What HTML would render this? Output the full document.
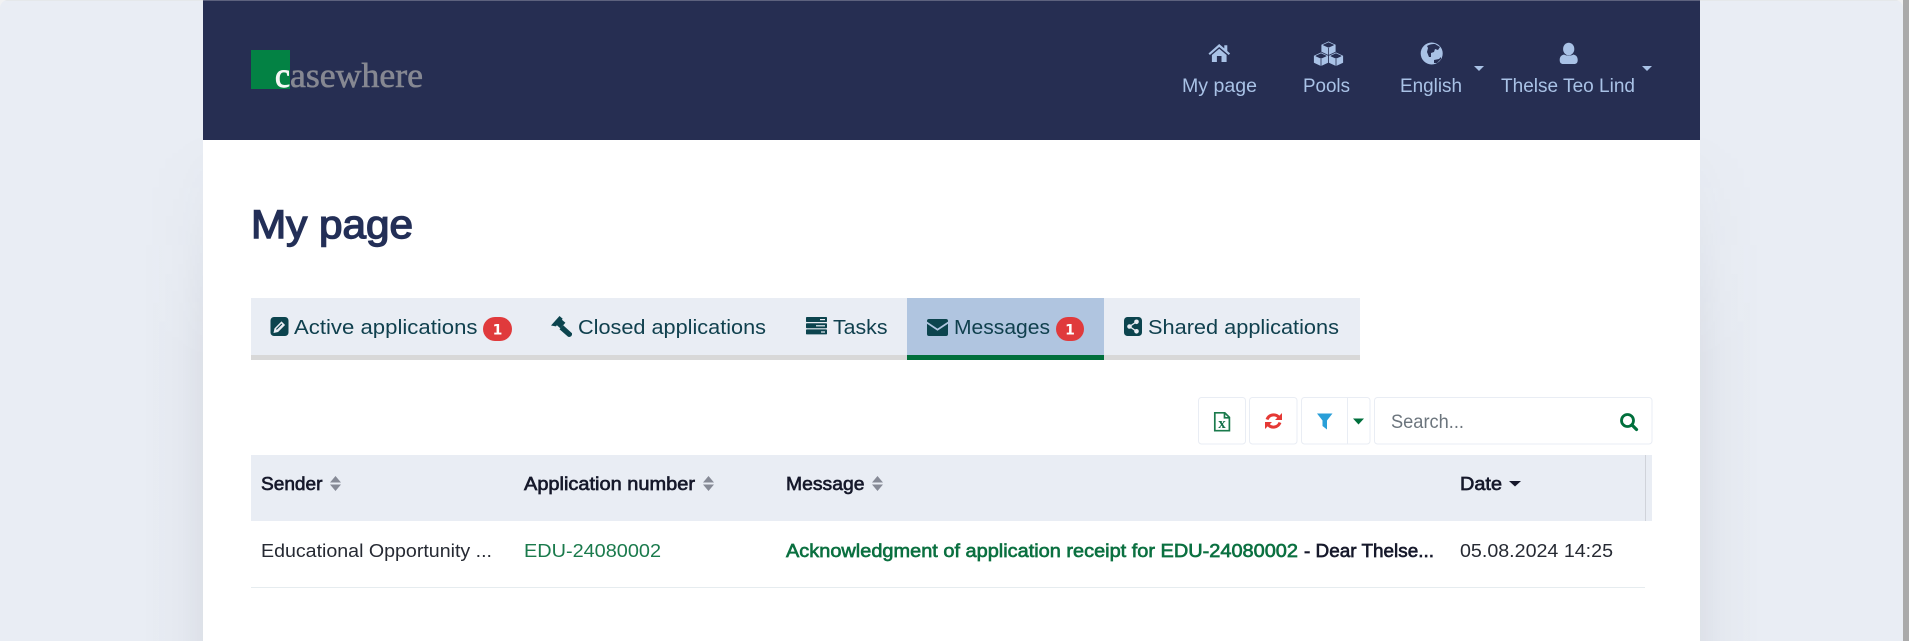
<!DOCTYPE html>
<html lang="en">
<head>
<meta charset="utf-8">
<title>My page</title>
<style>
html,body{margin:0;padding:0;width:1909px;height:641px;overflow:hidden;background:#f1f2f3;}
#bar{position:absolute;left:1903px;top:0;width:6px;height:641px;background:#aaaaaa;}
#bg{position:absolute;left:0;top:0;width:1903px;height:641px;background:#e9edf4;border-radius:8px 8px 0 0;overflow:hidden;}
#topline{position:absolute;left:0;top:0;width:1903px;height:1px;background:#e5e8ea;}
.sh{position:absolute;top:130px;width:60px;height:511px;-webkit-mask-image:linear-gradient(to bottom,transparent 0,#000 45%);mask-image:linear-gradient(to bottom,transparent 0,#000 45%);}
#shl{left:143px;background:linear-gradient(to left,rgba(40,45,60,.06),rgba(40,45,60,.025) 35%,rgba(40,45,60,0));}
#shr{left:1700px;background:linear-gradient(to right,rgba(40,45,60,.06),rgba(40,45,60,.025) 35%,rgba(40,45,60,0));}
#panel{position:absolute;left:203px;top:0;width:1497px;height:641px;background:#fff;}
#head{position:absolute;left:203px;top:0;width:1497px;height:140px;background:#262e52;border-top:1px solid #5d627e;box-sizing:border-box;}
svg{position:absolute;left:0;top:0;}
text{font-family:"Liberation Sans",sans-serif;}
.nav{font-size:19.5px;fill:#a9c2e6;}
.tab{font-size:20.5px;fill:#10404e;}
.th{font-size:18.5px;fill:#16192b;stroke:#16192b;stroke-width:.65px;}
.td{font-size:18.5px;fill:#262a33;}
.bd{font-family:"DejaVu Sans",sans-serif;font-size:14px;font-weight:700;fill:#fff;text-anchor:middle;}
</style>
</head>
<body>
<div id="bar"></div>
<div id="bg">
  <div id="topline"></div>
  <div class="sh" id="shl"></div>
  <div class="sh" id="shr"></div>
  <div id="panel"></div>
  <div id="head"></div>
</div>
<svg width="1909" height="641" viewBox="0 0 1909 641" xmlns="http://www.w3.org/2000/svg">
  <!-- logo -->
  <rect x="251" y="50" width="39" height="39" fill="#038244"/>
  <text x="275" y="87" textLength="15" lengthAdjust="spacingAndGlyphs" style="font-family:'Liberation Serif',serif;font-size:35px;fill:#f4f8f5;stroke:#f4f8f5;stroke-width:.9px">c</text>
  <text x="290" y="87" textLength="133" lengthAdjust="spacingAndGlyphs" style="font-family:'Liberation Serif',serif;font-size:35px;fill:#868892;stroke:#868892;stroke-width:.6px">asewhere</text>

  <!-- nav icons -->
  <g fill="#a9c2e6">
    <g transform="translate(1208.5,44)">
      <path d="M10.7 0 L15.8 4.4 V1.2 H18.8 V7 L21.6 9.5 L20.2 11 L10.7 3 L1.4 11 L0 9.5 Z"/>
      <path d="M3.4 11 L10.7 4.8 L18.1 11 V18 H13 V12 H8.4 V18 H3.4 Z"/>
    </g>
    <g stroke="#262e52" stroke-width=".8" stroke-linejoin="round">
      <path d="M1328.500 41 l7.500 3.500 v8 l-7.500 3.500 l-7.500 -3.500 v-8 Z"/>
      <path d="M1321 52 l7.500 3.500 v7.500 l-7.500 3.500 l-7.500 -3.500 v-7.500 Z"/>
      <path d="M1336 52 l7.500 3.500 v7.500 l-7.500 3.500 l-7.500 -3.500 v-7.500 Z"/>
      <path fill="#262e52" d="M1323.500 45 l5 -2.200 l5 2.200 l-5 2.200 Z M1316 56 l5 -2.200 l5 2.200 l-5 2.200 Z M1331 56 l5 -2.200 l5 2.200 l-5 2.200 Z"/>
      <path fill="none" d="M1328.500 48 v7 M1321 59 v7 M1336 59 v7"/>
    </g>
    <circle cx="1431.700" cy="53.500" r="11"/>
    <path fill="#262e52" d="M1427 46 c3 -2 6 -2 8 -2 l5 3 l-2 3 l-3 -1 l-1 3 l-3 1 l0 4 l-2 0 l-2 -5 l1 -4 Z M1434 60 l5 -1 l2 -2 l0 2 l-4 4 l-3 0 Z"/>
    <ellipse cx="1568.700" cy="49" rx="5.600" ry="6.300"/>
    <path d="M1564 54.500 c2.500 1.500 7 1.500 9.500 0 c2.800 .8 4.200 2.500 4.200 5.500 c0 3 -1.500 4 -3.500 4 h-11 c-2 0 -3.500 -1 -3.500 -4 c0 -3 1.400 -4.700 4.300 -5.500 Z"/>
    <path d="M1474 66 h10 l-5 5 Z"/>
    <path d="M1642 66 h10 l-5 5 Z"/>
  </g>
  <text class="nav" x="1182" y="92" textLength="75" lengthAdjust="spacingAndGlyphs">My page</text>
  <text class="nav" x="1303" y="92" textLength="47" lengthAdjust="spacingAndGlyphs">Pools</text>
  <text class="nav" x="1400" y="92" textLength="62" lengthAdjust="spacingAndGlyphs">English</text>
  <text class="nav" x="1501" y="92" textLength="134" lengthAdjust="spacingAndGlyphs">Thelse Teo Lind</text>

  <!-- title -->
  <text x="251" y="238" textLength="162" lengthAdjust="spacingAndGlyphs" style="font-size:40px;fill:#232f57;stroke:#232f57;stroke-width:1.4px">My page</text>

  <!-- tabs -->
  <rect x="251" y="298" width="1109" height="57" fill="#e9edf4"/>
  <rect x="251" y="355" width="1109" height="5" fill="#d8d8d8"/>
  <rect x="907" y="298" width="197" height="57" fill="#b0c5e0"/>
  <rect x="907" y="355" width="197" height="5" fill="#006f3c"/>

  <g fill="#0c444e">
    <rect x="270.500" y="317" width="18" height="19" rx="3.500"/>
    <path fill="#e9edf4" d="M273.500 333 l1 -4.600 l7 -7 l3.600 3.600 l-7 7 Z"/>
    <path d="M276 329 l5.500 -5.500 l.8 .8 l-5.500 5.500 Z"/>

    <g>
      <path d="M551 325.500 l8.500 -9.500 l3.200 2.800 l-.8 .9 l3.500 3.100 l-5 5.600 l-3.500 -3.100 l-1 1.100 Z"/>
      <path d="M559.500 329.300 l3.700 -4 l8.800 8 q.4 1.600 -.9 3 q-1.400 1.100 -3 .5 Z"/>
    </g>

    <rect x="806" y="317" width="21" height="5" rx=".8"/>
    <rect x="806" y="323.200" width="21" height="5" rx=".8"/>
    <rect x="806" y="329.400" width="21" height="5" rx=".8"/>
    <rect x="820" y="319" width="5" height="1.200" fill="#e9edf4"/>
    <rect x="816" y="325.200" width="9" height="1.200" fill="#e9edf4"/>
    <rect x="821" y="331.400" width="4" height="1.200" fill="#e9edf4"/>

    <path d="M927 321 q0 -2 2 -2 h17 q2 0 2 2 v.6 l-10.500 7 l-10.500 -7 Z"/>
    <path d="M927 323.800 l10.500 7 l10.500 -7 v10.200 q0 2 -2 2 h-17 q-2 0 -2 -2 Z"/>

    <rect x="1124" y="317" width="18" height="19" rx="3.500"/>
  </g>
  <g fill="#e9edf4">
    <circle cx="1136.500" cy="321.800" r="2.300"/>
    <circle cx="1136.500" cy="331.300" r="2.300"/>
    <circle cx="1129.500" cy="326.500" r="2.300"/>
    <path d="M1129.500 326.500 L1136.500 321.800 M1129.500 326.500 L1136.500 331.300" stroke="#e9edf4" stroke-width="1.300"/>
  </g>

  <text class="tab" x="294" y="334" textLength="183.500" lengthAdjust="spacingAndGlyphs">Active applications</text>
  <rect x="483" y="317" width="29" height="24" rx="12" fill="#e03a3c"/>
  <text class="bd" x="497.500" y="334.500">1</text>
  <text class="tab" x="578" y="334" textLength="188" lengthAdjust="spacingAndGlyphs">Closed applications</text>
  <text class="tab" x="833" y="334" textLength="54.500" lengthAdjust="spacingAndGlyphs">Tasks</text>
  <text class="tab" x="954" y="334" textLength="96" lengthAdjust="spacingAndGlyphs">Messages</text>
  <rect x="1056" y="317" width="28" height="24" rx="12" fill="#e03a3c"/>
  <text class="bd" x="1070" y="334.500">1</text>
  <text class="tab" x="1148" y="334" textLength="191" lengthAdjust="spacingAndGlyphs">Shared applications</text>

  <!-- toolbar -->
  <g fill="#fff" stroke="#e9edf4" stroke-width="1">
    <rect x="1198.500" y="397.500" width="47" height="46.500" rx="3"/>
    <rect x="1249.500" y="397.500" width="47.500" height="46.500" rx="3"/>
    <rect x="1301.500" y="397.500" width="68.500" height="46.500" rx="3"/>
    <rect x="1374.500" y="397.500" width="277.500" height="46.500" rx="3"/>
    <path d="M1347.500 397.500 V444" fill="none"/>
  </g>
  <g>
    <path d="M1214.800 412.800 h10 l4.600 4.600 v13.300 h-14.600 Z M1224.500 412.800 v5 h5" fill="none" stroke="#1a7a4c" stroke-width="1.700"/>
    <text x="1222" y="428" text-anchor="middle" style="font-family:'Liberation Serif',serif;font-size:15px;font-weight:700;fill:#14704a">x</text>
  </g>
  <g fill="none" stroke="#e53935" stroke-width="3">
    <path d="M1267 419.500 a7 7 0 0 1 12 -2"/>
    <path d="M1280 422.500 a7 7 0 0 1 -12 2"/>
  </g>
  <path fill="#e53935" d="M1282 413 v7 h-7 Z M1265 429 v-7 h7 Z"/>
  <path fill="#2a9fd8" d="M1317 413.500 h15.500 l-5.500 7 v9 l-4.500 -3.500 v-5.500 Z"/>
  <path fill="#006f3c" d="M1353 418.500 h11 l-5.500 6 Z"/>
  <text x="1391" y="428" textLength="73" lengthAdjust="spacingAndGlyphs" style="font-size:19.5px;fill:#6c757d">Search...</text>
  <g fill="none" stroke="#006f3c">
    <circle cx="1627.500" cy="420.500" r="6" stroke-width="2.800"/>
    <path d="M1632 425 L1636.500 429.500" stroke-width="3.200" stroke-linecap="round"/>
  </g>

  <!-- table -->
  <rect x="251" y="455" width="1401" height="66" fill="#e9edf4"/>
  <rect x="1645" y="455" width="1" height="66" fill="#d0d3da"/>
  <rect x="251" y="587" width="1394" height="1" fill="#e6ecef"/>

  <text class="th" x="261" y="490" textLength="61.500" lengthAdjust="spacingAndGlyphs">Sender</text>
  <text class="th" x="524" y="490" textLength="171" lengthAdjust="spacingAndGlyphs">Application number</text>
  <text class="th" x="786" y="490" textLength="78.500" lengthAdjust="spacingAndGlyphs">Message</text>
  <text class="th" x="1460" y="490" textLength="42" lengthAdjust="spacingAndGlyphs">Date</text>
  <g fill="#868a96">
    <path d="M330 482.500 h11 l-5.500 -6.500 Z M330 484.500 h11 l-5.500 6.500 Z"/>
    <path d="M703 482.500 h11 l-5.500 -6.500 Z M703 484.500 h11 l-5.500 6.500 Z"/>
    <path d="M872 482.500 h11 l-5.500 -6.500 Z M872 484.500 h11 l-5.500 6.500 Z"/>
  </g>
  <path fill="#16192b" d="M1509 481 h12 l-6 5.500 Z"/>

  <text class="td" x="261" y="557" textLength="231" lengthAdjust="spacingAndGlyphs">Educational Opportunity ...</text>
  <text x="524" y="557" textLength="137" lengthAdjust="spacingAndGlyphs" style="font-size:18.500px;fill:#1a7a4c">EDU-24080002</text>
  <text x="786" y="557" textLength="512" lengthAdjust="spacingAndGlyphs" style="font-size:18.500px;fill:#0b7040;stroke:#0b7040;stroke-width:.65px">Acknowledgment of application receipt for EDU-24080002</text>
  <text x="1304" y="557" textLength="130" lengthAdjust="spacingAndGlyphs" style="font-size:18.500px;fill:#16192b;stroke:#16192b;stroke-width:.65px">- Dear Thelse...</text>
  <text class="td" x="1460" y="557" textLength="153" lengthAdjust="spacingAndGlyphs">05.08.2024 14:25</text>
</svg>
</body>
</html>
